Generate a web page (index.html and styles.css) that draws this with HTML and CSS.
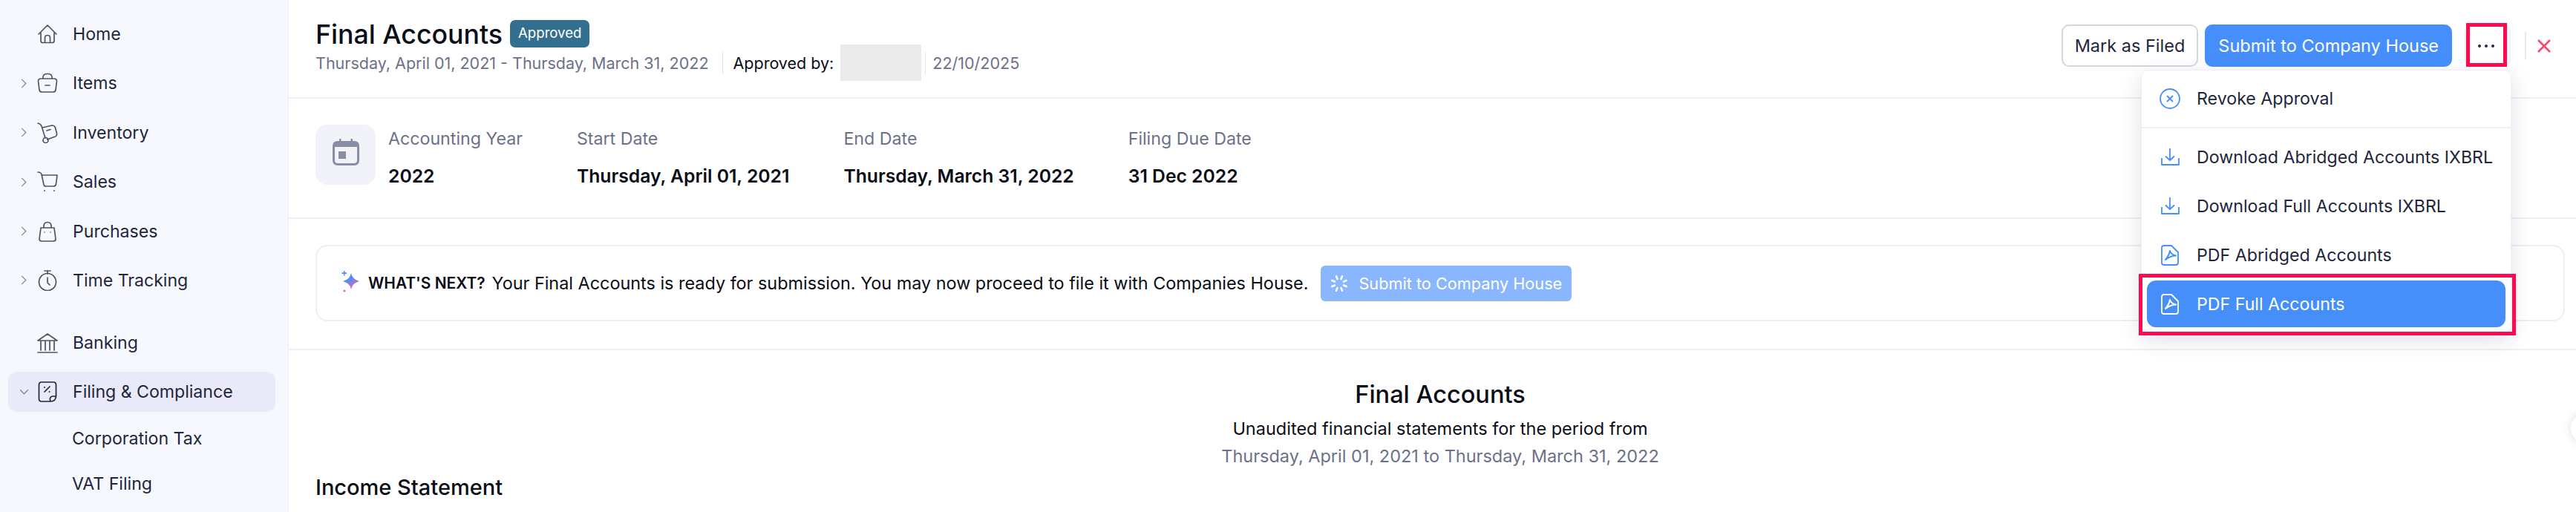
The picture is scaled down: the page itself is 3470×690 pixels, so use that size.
FILE: index.html
```html
<!DOCTYPE html>
<html lang="en">
<head>
    <meta charset="UTF-8">
    <meta name="viewport" content="width=device-width, initial-scale=1.0">
    <title>Final Accounts</title>
    <link rel="stylesheet" href="styles.css">
</head>
<body>
<div class="app">

    <!-- Sidebar -->
    <nav class="sidebar">
        <div class="nav-row">
            <span class="chev"></span>
            <svg class="nav-icon" viewBox="0 0 28 28"><path d="M2 14 14 2l12 12M5 12v11q0 2.500 2.500 2.500h13q2.500 0 2.500-2.500V12M10.500 25.500V19q0-3.500 3.500-3.500t3.500 3.500v6.500"/></svg>
            <span>Home</span>
        </div>
        <div class="nav-row">
            <svg class="chev" viewBox="0 0 10 16"><path d="m1.500 1 7 7-7 7"/></svg>
            <svg class="nav-icon" viewBox="0 0 28 28"><path d="M8 8V6q0-4.500 6-4.500T20 6v2M5 8h18q3.500 0 3.500 3.500L25 23q-.5 3-3.500 3h-15Q3.500 26 3 23L1.500 11.500Q1.500 8 5 8ZM11 17h6"/></svg>
            <span>Items</span>
        </div>
        <div class="nav-row">
            <svg class="chev" viewBox="0 0 10 16"><path d="m1.500 1 7 7-7 7"/></svg>
            <svg class="nav-icon" viewBox="0 0 28 28"><path d="M1 1q4 1 5 4l5 16M7 7l13-3q3.500 0 4.500 3l2 8q.5 3-2 4l-11 4M13 11l5-1.500"/><circle cx="11.500" cy="24" r="3.500"/></svg>
            <span>Inventory</span>
        </div>
        <div class="nav-row">
            <svg class="chev" viewBox="0 0 10 16"><path d="m1.500 1 7 7-7 7"/></svg>
            <svg class="nav-icon" viewBox="0 0 28 28"><path d="M1 1q4 0 5 3l3 14q.5 2 3 2h10q3 0 3.500-3L27 5H6"/><circle class="dot" cx="10" cy="26" r="1"/><circle class="dot" cx="23" cy="26" r="1"/></svg>
            <span>Sales</span>
        </div>
        <div class="nav-row">
            <svg class="chev" viewBox="0 0 10 16"><path d="m1.500 1 7 7-7 7"/></svg>
            <svg class="nav-icon" viewBox="0 0 28 28"><path d="M5 9h18l2 15q0 3-3 3H6q-3 0-3-3ZM9 9V7q0-5.500 5-5.500T19 7v2"/><circle class="dot" cx="10" cy="15" r=".8"/><circle class="dot" cx="18" cy="15" r=".8"/></svg>
            <span>Purchases</span>
        </div>
        <div class="nav-row nav-gap">
            <svg class="chev" viewBox="0 0 10 16"><path d="m1.500 1 7 7-7 7"/></svg>
            <svg class="nav-icon" viewBox="0 0 28 28"><path d="M10 1h8M14 1v4M14 10v7l3 3"/><circle cx="14" cy="16" r="11.500"/></svg>
            <span>Time Tracking</span>
        </div>
        <div class="nav-row">
            <span class="chev"></span>
            <svg class="nav-icon" viewBox="0 0 28 28"><path d="M1 11 14 2l13 9ZM1 27h26M5 12v12M11 12v12M17 12v12M23 12v12"/></svg>
            <span>Banking</span>
        </div>
        <div class="nav-row active">
            <svg class="chev chev-open" viewBox="0 0 14 10"><path d="m1 1.500 6 6 6-6"/></svg>
            <svg class="nav-icon" viewBox="0 0 28 28"><path d="M18 27H6q-3.500 0-3.500-3.500V4.500Q2.500 1 6 1h16q3.500 0 3.500 3.500V20Q25 27 18 27Zm0 0q-2-6 2.500-7h5M10 14l7-7"/><circle class="dot" cx="10" cy="8" r="1"/><circle class="dot" cx="16.500" cy="14" r="1"/></svg>
            <span>Filing &amp; Compliance</span>
        </div>
        <div class="sub-row">Corporation Tax</div>
        <div class="sub-row">VAT Filing</div>
    </nav>

    <main class="main">

        <!-- Title bar -->
        <header class="page-head">
            <div>
                <div class="title-row">
                    <h1>Final Accounts</h1>
                    <span class="badge">Approved</span>
                </div>
                <div class="meta-row">
                    <span class="muted">Thursday, April 01, 2021 - Thursday, March 31, 2022</span>
                    <span class="meta-sep"></span>
                    <span class="approved-by">Approved by:</span>
                    <span class="redacted"></span>
                    <span class="meta-sep meta-sep-b"></span>
                    <span class="muted">22/10/2025</span>
                </div>
            </div>
            <div class="actions">
                <button class="btn btn-filed">Mark as Filed</button>
                <button class="btn btn-primary">Submit to Company House</button>
                <button class="btn btn-more">
                    <span class="more-dots"><i></i><i></i><i></i></span>
                    <span class="callout callout-more"></span>
                </button>
                <span class="actions-sep"></span>
                <svg class="close-x" viewBox="0 0 20 18"><path d="m2 1 16 16M18 1 2 17"/></svg>
            </div>
        </header>

        <!-- Accounting details -->
        <section class="details">
            <div class="cal-box">
                <svg class="cal-icon" viewBox="0 0 36 36" width="36" height="36">
                    <path class="cal-fill" d="M9 0h2.500v3h13V0H27v3h2q7 0 7 7v19q0 7-7 7H7q-7 0-7-7V10q0-7 7-7h2ZM3 11v18q0 4 4 4h22q4 0 4-4V11Z"/>
                    <rect class="cal-fill" x="8" y="17" width="10" height="10"/>
                </svg>
            </div>
            <div class="detail">
                <span class="detail-label">Accounting Year</span>
                <span class="detail-value">2022</span>
            </div>
            <div class="detail">
                <span class="detail-label">Start Date</span>
                <span class="detail-value">Thursday, April 01, 2021</span>
            </div>
            <div class="detail">
                <span class="detail-label">End Date</span>
                <span class="detail-value">Thursday, March 31, 2022</span>
            </div>
            <div class="detail">
                <span class="detail-label">Filing Due Date</span>
                <span class="detail-value">31 Dec 2022</span>
            </div>
        </section>

        <!-- What's next -->
        <section class="next-wrap">
            <div class="next-box">
                <svg class="sparkle" viewBox="0 0 28 30" width="28" height="30">
                    <defs>
                        <linearGradient id="spark" x1="0.2" y1="0" x2="0.7" y2="1">
                            <stop offset="0.35" stop-color="#4f8df8"/>
                            <stop offset="1" stop-color="#ee6aa8"/>
                        </linearGradient>
                    </defs>
                    <path fill="url(#spark)" d="M13 3q1.500 8.500 11 11-9.500 2.500-11 11-1.500-8.500-11-11 9.500-2.500 11-11Z"/>
                    <path fill="#4a8cf8" d="M3 0h1.500v2.200H7v1.800H4.500v2.500H3V4H.5V2.200H3Z"/>
                    <path fill="#f0508c" d="M4 25q.4 1.400 2 2-1.600.6-2 2-.4-1.400-2-2 1.600-.6 2-2Z"/>
                </svg>
                <b class="next-tag">WHAT'S NEXT?</b>
                <span class="next-text">Your Final Accounts is ready for submission. You may now proceed to file it with Companies House.</span>
                <button class="btn-loading">
                    <svg viewBox="0 0 24 24" width="24" height="24"><path transform="rotate(22.5 12 12)" d="M12 1.500v4M12 18.500v4M1.500 12h4M18.500 12h4M4.600 4.600l2.800 2.800M16.600 16.600l2.800 2.800M19.400 4.600l-2.800 2.800M7.400 16.600l-2.800 2.800"/></svg>
                    Submit to Company House
                </button>
            </div>
        </section>

        <!-- Report -->
        <section class="report">
            <h2>Final Accounts</h2>
            <p class="report-sub">Unaudited financial statements for the period from</p>
            <p class="report-date">Thursday, April 01, 2021 to Thursday, March 31, 2022</p>
            <h3>Income Statement</h3>
        </section>
    </main>

    <!-- Dropdown -->
    <div class="menu">
        <div class="menu-item menu-first">
            <svg class="menu-icon" viewBox="0 0 28 28"><circle cx="14" cy="14" r="13"/><path d="m10 10 8 8M18 10l-8 8"/></svg>
            Revoke Approval
        </div>
        <div class="menu-item">
            <svg class="menu-icon" viewBox="0 0 28 28"><path d="M14 2v16M8 12.500l6 5.500 6-5.500M3 15v9h23v-9"/></svg>
            Download Abridged Accounts IXBRL
        </div>
        <div class="menu-item">
            <svg class="menu-icon" viewBox="0 0 28 28"><path d="M14 2v16M8 12.500l6 5.500 6-5.500M3 15v9h23v-9"/></svg>
            Download Full Accounts IXBRL
        </div>
        <div class="menu-item">
            <svg class="menu-icon" viewBox="0 0 28 28"><path d="M6 1h10l9 9v14q0 3-3 3H6q-3 0-3-3V4q0-3 3-3Z"/><path class="pdf-mark" d="M8 20Q13 14 14 8Q15.500 13 22 14.500Q14 15 8 20Z"/></svg>
            PDF Abridged Accounts
        </div>
        <div class="menu-item menu-selected">
            <svg class="menu-icon" viewBox="0 0 28 28"><path d="M6 1h10l9 9v14q0 3-3 3H6q-3 0-3-3V4q0-3 3-3Z"/><path class="pdf-mark" d="M8 20Q13 14 14 8Q15.500 13 22 14.500Q14 15 8 20Z"/></svg>
            PDF Full Accounts
        </div>
        <span class="callout callout-item"></span>
    </div>

    <span class="edge-handle"></span>
</div>
</body>
</html>
```
FILE: styles.css
```css
* {
    box-sizing: border-box;
}
body {
    margin: 0;
    font-family: Inter, "Noto Sans", sans-serif;
    color: #21263c;
    background: #fff;
}
.app {
    position: relative;
    display: flex;
    height: 690px;
    overflow: hidden;
}

/* Sidebar */
.sidebar {
    width: 389px;
    flex: none;
    padding: 19px 17px 0 11px;
    background: #f7f8fe;
    border-right: 1px solid #eeeff5;
    font-size: 23.1px;
}
.nav-row {
    display: flex;
    align-items: center;
    height: 54px;
    margin-bottom: 12.4px;
    border-radius: 12px;
}
.nav-gap {
    margin-bottom: 30px;
}
.chev {
    width: 8px;
    height: 13px;
    margin: 0 14px 0 17px;
    flex: none;
    fill: none;
    stroke: #84879a;
    stroke-width: 1.6;
}
.chev-open {
    width: 13px;
    height: 9px;
    margin: 0 11px 0 15px;
}
.nav-icon {
    width: 28px;
    height: 28px;
    margin-right: 20px;
    flex: none;
    fill: none;
    stroke: #4f5469;
    stroke-width: 1.700;
    stroke-linecap: round;
    stroke-linejoin: round;
}
.nav-icon .dot {
    fill: #4f5469;
    stroke: none;
}
.active {
    background: #e9e9f9;
    margin-bottom: 6px;
}
.active .nav-icon {
    stroke: #21263c;
}
.active .nav-icon .dot {
    fill: #21263c;
}
.sub-row {
    height: 61px;
    line-height: 61px;
    padding-left: 86px;
}

/* Page */
.main {
    flex: 1;
    min-width: 0;
}
.page-head {
    display: flex;
    justify-content: space-between;
    height: 133px;
    padding: 27px 33px 0 36px;
    border-bottom: 2px solid #eeeef4;
}
.title-row {
    display: flex;
    height: 33px;
    gap: 10px;
}
h1 {
    margin: 0;
    font-size: 35.7px;
    line-height: 38px;
    font-weight: 500;
    color: #0b0d17;
}
.badge {
    height: 37px;
    padding: 0 11px;
    line-height: 35px;
    font-size: 18.6px;
    color: #fff;
    background: #33708f;
    border-radius: 7px;
}
.meta-row {
    display: flex;
    align-items: center;
    height: 49px;
    font-size: 21.5px;
}
.muted {
    color: #6c718a;
}
.meta-sep {
    width: 1px;
    height: 30px;
    margin: 0 14px 0 18px;
    background: #e3e4ea;
}
.meta-sep-b {
    margin: 0 9px 0 5px;
}
.approved-by {
    color: #0b0d17;
}
.redacted {
    width: 109px;
    height: 49px;
    margin-left: 9px;
    background: #ebebeb;
}

/* Buttons */
.actions {
    display: flex;
    align-items: center;
    height: 57px;
    margin-top: 6px;
}
.btn {
    position: relative;
    height: 57px;
    padding: 0 16px;
    font: inherit;
    font-size: 23.5px;
    color: #21263c;
    background: #fff;
    border: 2px solid #d5d6e0;
    border-radius: 10px;
}
.btn-primary {
    margin-left: 9px;
    color: #fff;
    background: #468ffb;
    border-color: #468ffb;
}
.btn-more {
    width: 62px;
    padding: 0 4px 0 0;
    margin-left: 17px;
    border-color: #eeeef4;
}
.more-dots {
    display: flex;
    justify-content: center;
    gap: 5px;
}
.more-dots i {
    width: 4px;
    height: 4px;
    border-radius: 50%;
    background: #21263c;
}
.actions-sep {
    width: 2px;
    height: 37px;
    margin: 0 14px 0 19px;
    background: #e9e9ef;
}
.close-x {
    width: 20px;
    height: 18px;
    fill: none;
    stroke: #f9476f;
    stroke-width: 2.6;
}
.callout {
    position: absolute;
    border: 5px solid #ff0a50;
    pointer-events: none;
}
.callout-more {
    top: -4px;
    left: 0;
    width: 55px;
    height: 59px;
}

/* Details strip */
.details {
    display: flex;
    height: 162px;
    padding: 35px 0 0 36px;
    border-bottom: 2px solid #eeeef4;
}
.cal-box {
    display: flex;
    align-items: center;
    justify-content: center;
    width: 81px;
    height: 81px;
    margin-right: 17px;
    background: #f2f2f9;
    border-radius: 16px;
}
.cal-icon {
    margin-bottom: 8px;
}
.cal-fill {
    fill: #8a8ea5;
    fill-rule: evenodd;
}
.detail {
    display: flex;
    flex-direction: column;
    justify-content: space-between;
    height: 81px;
    margin-right: 73px;
}
.detail-label {
    line-height: 38px;
    font-size: 23.2px;
    color: #6c718a;
}
.detail-value {
    line-height: 24px;
    font-size: 24.7px;
    font-weight: 600;
    color: #0b0d17;
}

/* What's next */
.next-wrap {
    height: 177px;
    padding: 35px 15px 0 36px;
    border-bottom: 2px solid #eeeef4;
}
.next-box {
    display: flex;
    align-items: center;
    height: 103px;
    padding-left: 33px;
    font-size: 23.4px;
    color: #0b0d17;
    border: 2px solid #eeeef4;
    border-radius: 16px;
}
.sparkle {
    margin: -4px 8px 0 0;
    flex: none;
}
.next-tag {
    font-size: 20.9px;
    font-weight: 600;
    margin-right: 9px;
}
.btn-loading {
    display: flex;
    align-items: center;
    gap: 14px;
    height: 48px;
    margin-left: 17px;
    padding: 0 13px;
    font: inherit;
    font-size: 21.7px;
    color: #fff;
    background: #8ab6ff;
    border: none;
    border-radius: 6px;
}
.btn-loading svg {
    fill: none;
    stroke: #fff;
    stroke-width: 2.6;
    stroke-linecap: round;
}

/* Report */
.report {
    padding: 40px 15px 0 36px;
    text-align: center;
}
.report h2 {
    margin: 0;
    height: 48px;
    font-size: 32.5px;
    line-height: 40px;
    font-weight: 500;
    color: #0b0d17;
}
.report p {
    margin: 0;
    height: 37px;
    line-height: 36px;
    font-size: 23.5px;
}
.report-sub {
    color: #0b0d17;
}
.report-date {
    color: #6c718a;
}
.report h3 {
    margin: 3px 0 0;
    font-size: 29px;
    line-height: 40px;
    font-weight: 500;
    text-align: left;
    color: #0b0d17;
}

/* Dropdown */
.menu {
    position: absolute;
    top: 94px;
    left: 2884px;
    width: 499px;
    height: 356px;
    padding: 0 7px;
    font-size: 23.2px;
    background: #fff;
    border: 1px solid #eeeef4;
    border-radius: 10px;
    box-shadow: 0 8px 28px rgba(60, 64, 110, 0.16);
}
.menu-item {
    display: flex;
    align-items: center;
    height: 66px;
    margin: 0 -7px;
    padding-left: 24px;
}
.menu-first {
    height: 78px;
    margin-bottom: 6px;
    border-bottom: 2px solid #eeeef4;
}
.menu-icon {
    width: 28px;
    height: 28px;
    margin-right: 22px;
    flex: none;
    fill: none;
    stroke: #468ffb;
    stroke-width: 1.8;
    stroke-linejoin: round;
}
.pdf-mark {
    stroke-width: 2;
}
.menu-selected {
    height: 63px;
    margin: 1px 0 0;
    padding-left: 17px;
    color: #fff;
    background: #468ffb;
    border-radius: 12px;
}
.menu-selected .menu-icon {
    stroke: #fff;
}
.callout-item {
    left: -4px;
    top: 274px;
    width: 508px;
    height: 83px;
}

.edge-handle {
    position: absolute;
    top: 557px;
    left: 3463px;
    width: 40px;
    height: 40px;
    background: #fff;
    border-radius: 50%;
    box-shadow: 0 0 12px rgba(60, 64, 110, 0.18);
}
```
